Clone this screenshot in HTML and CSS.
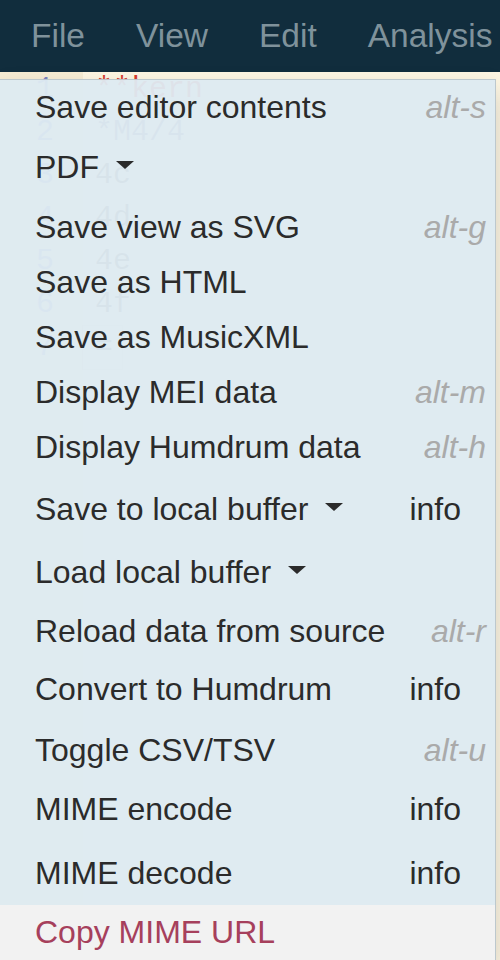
FILE: index.html
```html
<!DOCTYPE html>
<html lang="en">
<head>
<meta charset="utf-8">
<title>Humdrum viewer – File menu</title>
<link rel="stylesheet" href="styles.css">
</head>
<body>
<header class="navbar">
  <nav class="nav">
    <span class="nav-link">File</span>
    <span class="nav-link">View</span>
    <span class="nav-link">Edit</span>
    <span class="nav-link">Analysis</span>
  </nav>
</header>

<main class="editor">
  <div class="gutter">
    <div class="lines">
      <div class="num first">1</div>
      <div class="num">2</div>
      <div class="num">3</div>
      <div class="num">4</div>
      <div class="num">5</div>
      <div class="num">6</div>
      <div class="num">7</div>
    </div>
  </div>
  <div class="code">
    <div class="lines">
      <div class="ln excl">**kern</div>
      <div class="ln interp">*M4/4</div>
      <div class="ln">4c</div>
      <div class="ln">4d</div>
      <div class="ln">4e</div>
      <div class="ln">4f</div>
      <div class="ln cur">=</div>
    </div>
  </div>

  <ul class="dropdown">
    <li class="item h60">Save editor contents<span class="key">alt-s</span></li>
    <li class="item h60">PDF<span class="caret"></span></li>
    <li class="item">Save view as SVG<span class="key">alt-g</span></li>
    <li class="item">Save as HTML</li>
    <li class="item">Save as MusicXML</li>
    <li class="item">Display MEI data<span class="key">alt-m</span></li>
    <li class="item h62">Display Humdrum data<span class="key">alt-h</span></li>
    <li class="item h63">Save to local buffer<span class="caret"></span><span class="info">info</span></li>
    <li class="item h59">Load local buffer<span class="caret"></span></li>
    <li class="item h58">Reload data from source<span class="key">alt-r</span></li>
    <li class="item h61">Convert to Humdrum<span class="info">info</span></li>
    <li class="item h59">Toggle CSV/TSV<span class="key">alt-u</span></li>
    <li class="item h64">MIME encode<span class="info">info</span></li>
    <li class="item h59">MIME decode<span class="info">info</span></li>
    <li class="item active">Copy MIME URL</li>
  </ul>
</main>
</body>
</html>
```

FILE: styles.css
```css
html, body {
  margin: 0;
  padding: 0;
  width: 500px;
  height: 960px;
  overflow: hidden;
  background: #fdf6e3;
  font-family: "Liberation Sans", Arial, Helvetica, sans-serif;
}

.navbar {
  height: 72px;
  background: #112d3d;
}

.nav {
  display: flex;
  gap: 51px;
  padding-left: 31px;
  font-size: 33.5px;
  line-height: 72px;
  color: #7f929b;
  white-space: nowrap;
}

.editor {
  position: relative;
  display: flex;
  height: 888px;
}

.gutter {
  width: 83px;
  flex: none;
  background: #f6ecd4;
}

.code {
  flex: 1;
  background: #fdf6e3;
  padding-left: 12px;
}

.lines {
  margin-top: -4px;
  font-family: "Liberation Mono", "DejaVu Sans Mono", monospace;
  font-size: 30px;
  line-height: 43px;
}

.num {
  text-align: right;
  padding-right: 29px;
  color: #7c82c0;
}

.ln {
  color: #555555;
}

.ln.excl {
  color: #d63a2f;
}

.ln.interp {
  color: #6a6a8a;
}

.ln.cur {
  width: 27px;
  margin-left: -12px;
  padding-left: 12px;
  outline: 1px solid rgba(0, 0, 0, 0.12);
}

.dropdown {
  position: absolute;
  top: 7px;
  left: 0;
  width: 495px;
  margin: 0;
  padding: 0;
  list-style: none;
  background: rgba(222, 234, 241, 0.955);
  border-top: 1px solid rgba(0, 0, 0, 0.15);
  border-right: 1px solid rgba(0, 0, 0, 0.15);
  box-shadow: 0 12px 24px rgba(0, 0, 0, 0.175);
  font-size: 32px;
  line-height: 36px;
  color: #2b2b2b;
}

.item {
  display: flex;
  align-items: flex-start;
  box-sizing: border-box;
  height: 55px;
  padding: 9px 0 0 35px;
  white-space: nowrap;
}

.h58 { height: 58px; }
.h59 { height: 59px; }
.h60 { height: 60px; }
.h61 { height: 61px; }
.h62 { height: 62px; }
.h63 { height: 63px; }
.h64 { height: 64px; }

.key {
  margin-left: auto;
  margin-right: 9px;
  font-style: italic;
  color: #aaaaaa;
}

.info {
  margin-left: auto;
  margin-right: 34px;
  color: #2b2b2b;
}

.caret {
  display: block;
  flex: none;
  width: 0;
  height: 0;
  margin-left: 17px;
  margin-top: 12px;
  border-top: 8px solid #2b2b2b;
  border-left: 9px solid transparent;
  border-right: 9px solid transparent;
}

.item.active {
  background: #f2f2f2;
  color: #a6405c;
}
```
